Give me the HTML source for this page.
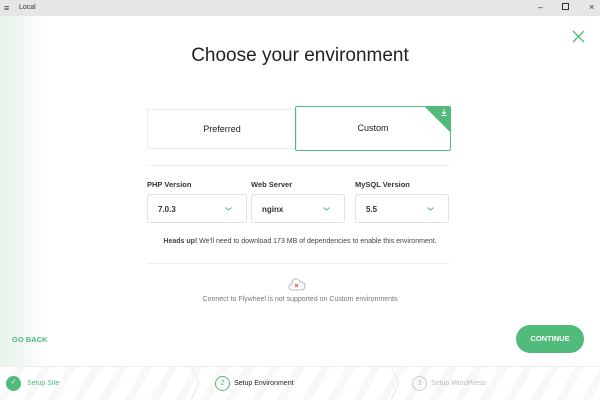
<!DOCTYPE html>
<html><head><style>
*{margin:0;padding:0;box-sizing:border-box}
body{width:600px;height:400px;overflow:hidden;background:#fff;font-family:"Liberation Sans",sans-serif;position:relative;color:#222}
.a{position:absolute}
.tb{left:0;top:0;width:600px;height:16px;background:#e6e6e6;font-size:7px;color:#333}
.grad{left:0;top:16px;width:48px;height:350px;background:linear-gradient(90deg,#e6f3ea,#fff)}
.sel{top:194px;height:29px;border:1px solid #e3e3e3;border-radius:2px;font-size:8px;font-weight:bold;padding:10px 0 0 10px;color:#333}
.sel svg{position:absolute;right:14px;top:12px}
.lbl{top:180px;font-size:7.5px;font-weight:bold;color:#333}
.foot{left:0;top:366px;width:600px;height:34px;border-top:1px solid #eee;background:repeating-linear-gradient(120deg,#fff 0 14px,#f8f8f8 14px 22px)}
.circ{width:15px;height:15px;border-radius:50%;top:376px;font-size:7px;text-align:center;line-height:13px}
.st{top:380px;font-size:7px}
</style></head><body>
<div class="a tb"><span class="a" style="left:4px;top:3px;font-size:9px">≡</span><span class="a" style="left:19px;top:4px">Local</span>
<span class="a" style="left:538px;top:2px;font-size:9px">–</span><span class="a" style="left:562px;top:3px;width:7px;height:7px;border:1px solid #333"></span><span class="a" style="left:589px;top:2px;font-size:9px">×</span></div>
<div class="a grad"></div>
<svg class="a" style="left:572px;top:30px" width="13" height="13"><path d="M1 1L12 12M12 1L1 12" stroke="#51bb7b" stroke-width="1.3"/></svg>
<div class="a" style="left:0;width:600px;top:45px;text-align:center;font-size:19px;color:#222">Choose your environment</div>
<div class="a" style="left:147px;top:109px;width:150px;height:40px;border:1px solid #eee;font-size:9px;text-align:center;line-height:38px">Preferred</div>
<div class="a" style="left:295px;top:106px;width:156px;height:45px;border:1.5px solid #51bb7b;border-radius:2px;font-size:9px;text-align:center;line-height:42px;overflow:hidden">Custom
<div class="a" style="right:0;top:0;width:0;height:0;border-top:25px solid #51bb7b;border-left:25px solid transparent"></div>
<svg class="a" style="right:3px;top:2px" width="6" height="7"><path d="M3 0V5M1 3L3 5L5 3M0.5 6.5H5.5" stroke="#fff" stroke-width="0.9" fill="none"/></svg></div>
<div class="a" style="left:147px;top:165px;width:302px;height:1px;background:#eee"></div>
<div class="a lbl" style="left:147px">PHP Version</div>
<div class="a lbl" style="left:251px">Web Server</div>
<div class="a lbl" style="left:355px">MySQL Version</div>
<div class="a sel" style="left:147px;width:100px">7.0.3<svg width="7" height="4"><path d="M0.5 0.5L3.5 3L6.5 0.5" stroke="#51bb7b" fill="none"/></svg></div>
<div class="a sel" style="left:251px;width:94px">nginx<svg width="7" height="4"><path d="M0.5 0.5L3.5 3L6.5 0.5" stroke="#51bb7b" fill="none"/></svg></div>
<div class="a sel" style="left:355px;width:94px">5.5<svg width="7" height="4"><path d="M0.5 0.5L3.5 3L6.5 0.5" stroke="#51bb7b" fill="none"/></svg></div>
<div class="a" style="left:0;width:600px;top:238px;text-align:center;font-size:7px;color:#444"><b>Heads up!</b> We'll need to download 173 MB of dependencies to enable this environment.</div>
<div class="a" style="left:147px;top:263px;width:302px;height:1px;background:#eee"></div>
<svg class="a" style="left:288px;top:278px" width="18" height="14"><path d="M4 12a3 3 0 0 1 0-6a4 4 0 0 1 8-2a3.5 3.5 0 0 1 2 8z" fill="none" stroke="#aaa" stroke-width=".8"/><path d="M7 6l3 3M10 6l-3 3" stroke="#e05050" stroke-width="1"/></svg>
<div class="a" style="left:0;width:600px;top:296px;text-align:center;font-size:7px;color:#777">Connect to Flywheel is not supported on Custom environments</div>
<div class="a" style="left:12px;top:335px;font-size:7.5px;font-weight:bold;color:#51bb7b">GO BACK</div>
<div class="a" style="left:516px;top:325px;width:68px;height:28px;border-radius:14px;background:#51bb7b;color:#fff;font-size:7.5px;font-weight:bold;text-align:center;line-height:28px">CONTINUE</div>
<div class="a foot"></div>
<svg class="a" style="left:190px;top:367px" width="10" height="33"><path d="M1 0L9 16L1 33" stroke="#e8e8e8" fill="none"/></svg>
<svg class="a" style="left:390px;top:367px" width="10" height="33"><path d="M1 0L9 16L1 33" stroke="#e8e8e8" fill="none"/></svg>
<div class="a circ" style="left:6px;background:#51bb7b;color:#fff">✓</div>
<div class="a st" style="left:27px;color:#51bb7b">Setup Site</div>
<div class="a circ" style="left:215px;border:1px solid #51bb7b;color:#51bb7b">2</div>
<div class="a st" style="left:234px;color:#222">Setup Environment</div>
<div class="a circ" style="left:412px;border:1px solid #ccc;color:#bbb">3</div>
<div class="a st" style="left:431px;color:#bbb">Setup WordPress</div>
</body></html>
